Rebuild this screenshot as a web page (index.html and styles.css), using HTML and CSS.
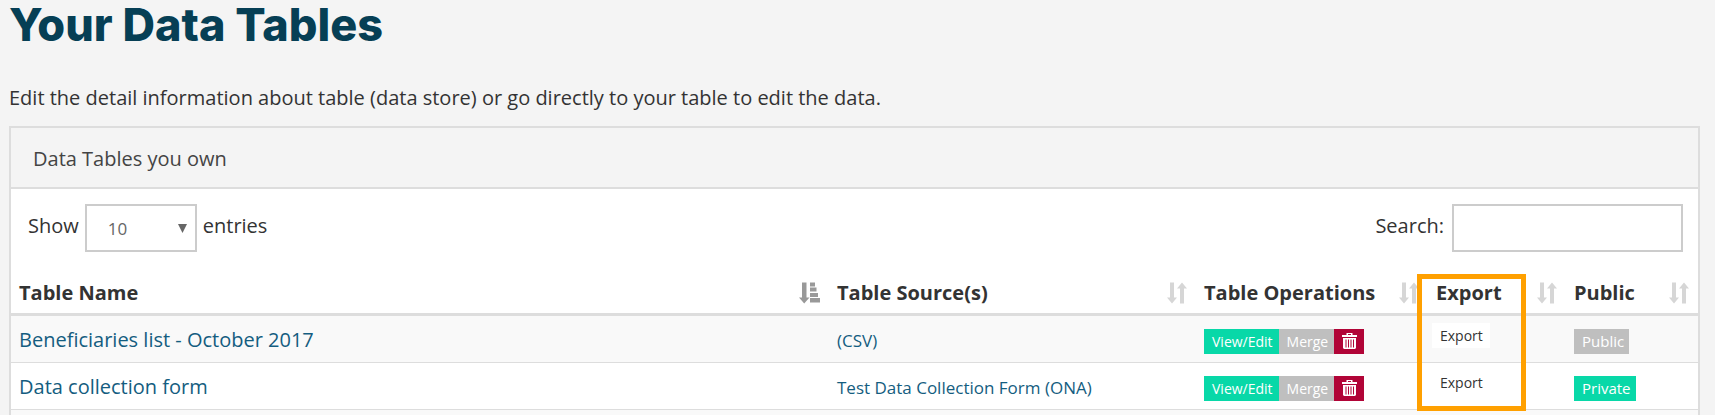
FILE: index.html
```
<!DOCTYPE html>
<html lang="en">
<head>
<meta charset="utf-8">
<title>Your Data Tables</title>
<link rel="stylesheet" href="styles.css">
</head>
<body>
<svg class="sprite" aria-hidden="true">
  <symbol id="sort" viewBox="0 0 20 22"><path d="M3 .5h4v15h3L5 21.500 0 15.500h3zM13 21.500v-15h-3L15 .5l5 6h-3v15z"/></symbol>
  <symbol id="sort-asc" viewBox="0 0 21 22"><path d="M3 .5h4.500v15h3L5.200 21.500 0 15.500h3zM11 .5h5v4h-5zM11 5.500h6.500v4H11zM11 11h8v4h-8zM11 16h10v4.500H11z"/></symbol>
  <symbol id="trash" viewBox="0 0 15 16"><path d="M4.500 0h6v2H15v2H0V2h4.500zM6 1v1h3V1zM1 5h13v10l-1 1H2l-1-1zM3.500 6.500v8h1v-8zM6 6.500v8h1v-8zM8.500 6.500v8h1v-8zM11 6.500v8h1v-8z" fill-rule="evenodd"/></symbol>
</svg>
<main class="page">
  <h1 class="title">Your Data Tables</h1>
  <p class="intro">Edit the detail information about table (data store) or go directly to your table to edit the data.</p>
  <section class="panel">
    <h2 class="panel-head">Data Tables you own</h2>
    <div class="controls">
      <label class="control">Show
        <span class="select"><select class="field length"><option>10</option><option>25</option><option>50</option></select><svg class="caret" viewBox="0 0 9 9"><path d="M0 0h9L4.500 9z"/></svg></span>
        entries</label>
      <label class="control search">Search: <input class="field query" type="search"></label>
    </div>
    <table class="grid">
      <colgroup><col class="c-name"><col class="c-source"><col class="c-ops"><col class="c-export"><col class="c-public"></colgroup>
      <thead>
        <tr>
          <th><div class="th">Table Name<svg class="sort active"><use href="#sort-asc"/></svg></div></th>
          <th><div class="th">Table Source(s)<svg class="sort"><use href="#sort"/></svg></div></th>
          <th><div class="th">Table Operations<svg class="sort"><use href="#sort"/></svg></div></th>
          <th class="marked"><div class="th">Export<svg class="sort"><use href="#sort"/></svg></div><span class="highlight"></span></th>
          <th><div class="th">Public<svg class="sort"><use href="#sort"/></svg></div></th>
        </tr>
      </thead>
      <tbody>
        <tr>
          <td><a href="#">Beneficiaries list - October 2017</a></td>
          <td class="source"><a href="#">(CSV)</a></td>
          <td><div class="ops"><button class="btn green">View/Edit</button><button class="btn gray">Merge</button><button class="btn red" aria-label="Delete"><svg class="trash"><use href="#trash"/></svg></button></div></td>
          <td class="export"><button class="btn white">Export</button></td>
          <td><div class="ops"><button class="btn status gray">Public</button></div></td>
        </tr>
        <tr>
          <td><a href="#">Data collection form</a></td>
          <td class="source"><a href="#">Test Data Collection Form (ONA)</a></td>
          <td><div class="ops"><button class="btn green">View/Edit</button><button class="btn gray">Merge</button><button class="btn red" aria-label="Delete"><svg class="trash"><use href="#trash"/></svg></button></div></td>
          <td class="export"><button class="btn white">Export</button></td>
          <td><div class="ops"><button class="btn status green">Private</button></div></td>
        </tr>
        <tr><td></td><td></td><td></td><td></td><td></td></tr>
      </tbody>
    </table>
  </section>
</main>
</body>
</html>
```
FILE: styles.css
```
* { box-sizing: border-box; }
body {
  margin: 0;
  background: #f4f4f4;
  color: #333;
  font: 20px/30px "Open Sans", "Noto Sans", sans-serif;
}
.sprite { display: none; }
.page {
  display: flex;
  flex-direction: column;
  height: 100vh;
  padding: 0 15px 0 9px;
}
.title {
  margin: 0 0 33px;
  color: #063f55;
  font: 800 45px/50px Inter, sans-serif;
}
.intro { margin: 0 0 13px; }
.panel {
  flex: 1;
  min-height: 0;
  overflow: hidden;
  border: 2px solid #ddd;
  border-bottom: 0;
  background: #fff;
}
.panel-head {
  margin: 0;
  padding: 16px 22px 13px;
  border-bottom: 2px solid #ddd;
  background: #f4f4f4;
  color: #444;
  font-size: 20px;
  font-weight: 400;
  line-height: 30px;
}
.controls {
  display: flex;
  justify-content: space-between;
  padding: 15px 15px 0 17px;
}
.control { display: flex; gap: 6px; line-height: 43px; }
.search { gap: 8px; }
.field {
  height: 48px;
  border: 2px solid #ccc;
  border-radius: 0;
  background: #fff;
  color: #666;
  font: 17px/26px "Open Sans", "Noto Sans", sans-serif;
}
.select { position: relative; display: flex; }
.length {
  width: 112px;
  padding: 2px 21px 0;
  appearance: none;
}
.caret {
  position: absolute;
  top: 20px;
  right: 10px;
  width: 9px;
  height: 9px;
  fill: #666;
  pointer-events: none;
}
.query { width: 231px; }
.grid {
  width: 100%;
  margin-top: 22px;
  border-collapse: separate;
  border-spacing: 0;
  table-layout: fixed;
}
.c-source { width: 367px; }
.c-ops { width: 232px; }
.c-export { width: 138px; }
.c-public { width: 132px; }
th {
  height: 42px;
  padding: 0 9px 2px 8px;
  border-bottom: 3px solid #ddd;
  text-align: left;
}
.th { display: flex; justify-content: space-between; align-items: center; }
.sort { width: 20px; height: 22px; fill: #d6d6d6; }
.active { width: 21px; fill: #999; }
td { height: 47px; padding: 2px 8px 0; border-bottom: 1px solid #ddd; }
tbody tr:nth-child(odd) { background: #f9f9f9; }
a { color: #145d80; text-decoration: none; }
.source { padding-top: 4px; font-size: 17px; }
.ops { display: flex; padding-top: 2px; }
.btn {
  display: flex;
  align-items: center;
  height: 25px;
  padding: 0 6px 0 8px;
  border: 0;
  color: #fff;
  font: 14px/25px "Open Sans", "Noto Sans", sans-serif;
}
.status { padding-right: 5px; font-size: 15px; }
.green { background: #08d8a8; }
.gray { background: #bfbfbf; }
.red { background: #b10437; padding: 0 7px 0 8px; }
.white { background: #fff; color: #333; padding: 0 7px 0 8px; }
.export { padding: 0 4px 8px; }
.trash { width: 15px; height: 16px; fill: #fff; }
.marked { position: relative; }
.highlight {
  position: absolute;
  top: 0;
  left: -11px;
  z-index: 1;
  width: 109px;
  height: 137px;
  border: 5px solid #ffa000;
}
```
